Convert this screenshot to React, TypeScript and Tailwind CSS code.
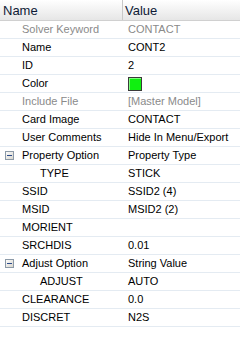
import React from "react";

type Row = {
  name: string;
  value?: string;
  indent?: 0 | 1;
  gray?: boolean;
  expander?: boolean;
  swatch?: boolean;
};

const rows: Row[] = [
  { name: "Solver Keyword", value: "CONTACT", gray: true },
  { name: "Name", value: "CONT2" },
  { name: "ID", value: "2" },
  { name: "Color", swatch: true },
  { name: "Include File", value: "[Master Model]", gray: true },
  { name: "Card Image", value: "CONTACT" },
  { name: "User Comments", value: "Hide In Menu/Export" },
  { name: "Property Option", value: "Property Type", expander: true },
  { name: "TYPE", value: "STICK", indent: 1 },
  { name: "SSID", value: "SSID2 (4)" },
  { name: "MSID", value: "MSID2 (2)" },
  { name: "MORIENT", value: "" },
  { name: "SRCHDIS", value: "0.01" },
  { name: "Adjust Option", value: "String Value", expander: true },
  { name: "ADJUST", value: "AUTO", indent: 1 },
  { name: "CLEARANCE", value: "0.0" },
  { name: "DISCRET", value: "N2S" },
];

function Expander() {
  return (
    <svg width="9" height="9" viewBox="0 0 9 9" className="block">
      <defs>
        <linearGradient id="exg" x1="0" y1="0" x2="1" y2="1">
          <stop offset="0" stopColor="#ffffff" />
          <stop offset="1" stopColor="#d6d3ca" />
        </linearGradient>
      </defs>
      <rect x="0.5" y="0.5" width="8" height="8" fill="url(#exg)" stroke="#8c9aa8" />
      <rect x="2" y="4" width="5" height="1" fill="#2b4a8a" />
    </svg>
  );
}

export default function App() {
  return (
    <div
      className="w-[240px] h-[344px] bg-white overflow-hidden text-[11px] leading-none"
      style={{ fontFamily: '"Liberation Sans", Arial, sans-serif' }}
    >
      <div className="flex h-[21px] bg-gradient-to-b from-white to-[#e6e6e6] border-b border-[#d0d0d0] text-[#0e1a36] text-[13px]">
        <div className="w-[123px] flex items-center pl-[3px] border-r border-[#c8c8c8]">Name</div>
        <div className="flex-1 flex items-center pl-[2px]">Value</div>
      </div>
      {rows.map((r, i) => (
        <div
          key={i}
          className={`flex h-[18px] border-b border-[#e4ebf2] ${r.gray ? "text-[#8a8a8a]" : "text-black"}`}
        >
          <div className="w-[124px] flex items-center">
            <div className="w-[22px] flex items-center pl-[5px]">{r.expander ? <Expander /> : null}</div>
            {r.indent === 1 ? <div className="w-[18px]" /> : null}
            <span className="whitespace-nowrap">{r.name}</span>
          </div>
          <div className="flex-1 flex items-center pl-[4px]">
            {r.swatch ? (
              <div className="w-[14px] h-[14px] border border-[#3a3a3a] bg-[#10f010] shadow-[inset_1px_1px_0_#7dff7d]" />
            ) : (
              <span className="whitespace-nowrap">{r.value}</span>
            )}
          </div>
        </div>
      ))}
    </div>
  );
}
